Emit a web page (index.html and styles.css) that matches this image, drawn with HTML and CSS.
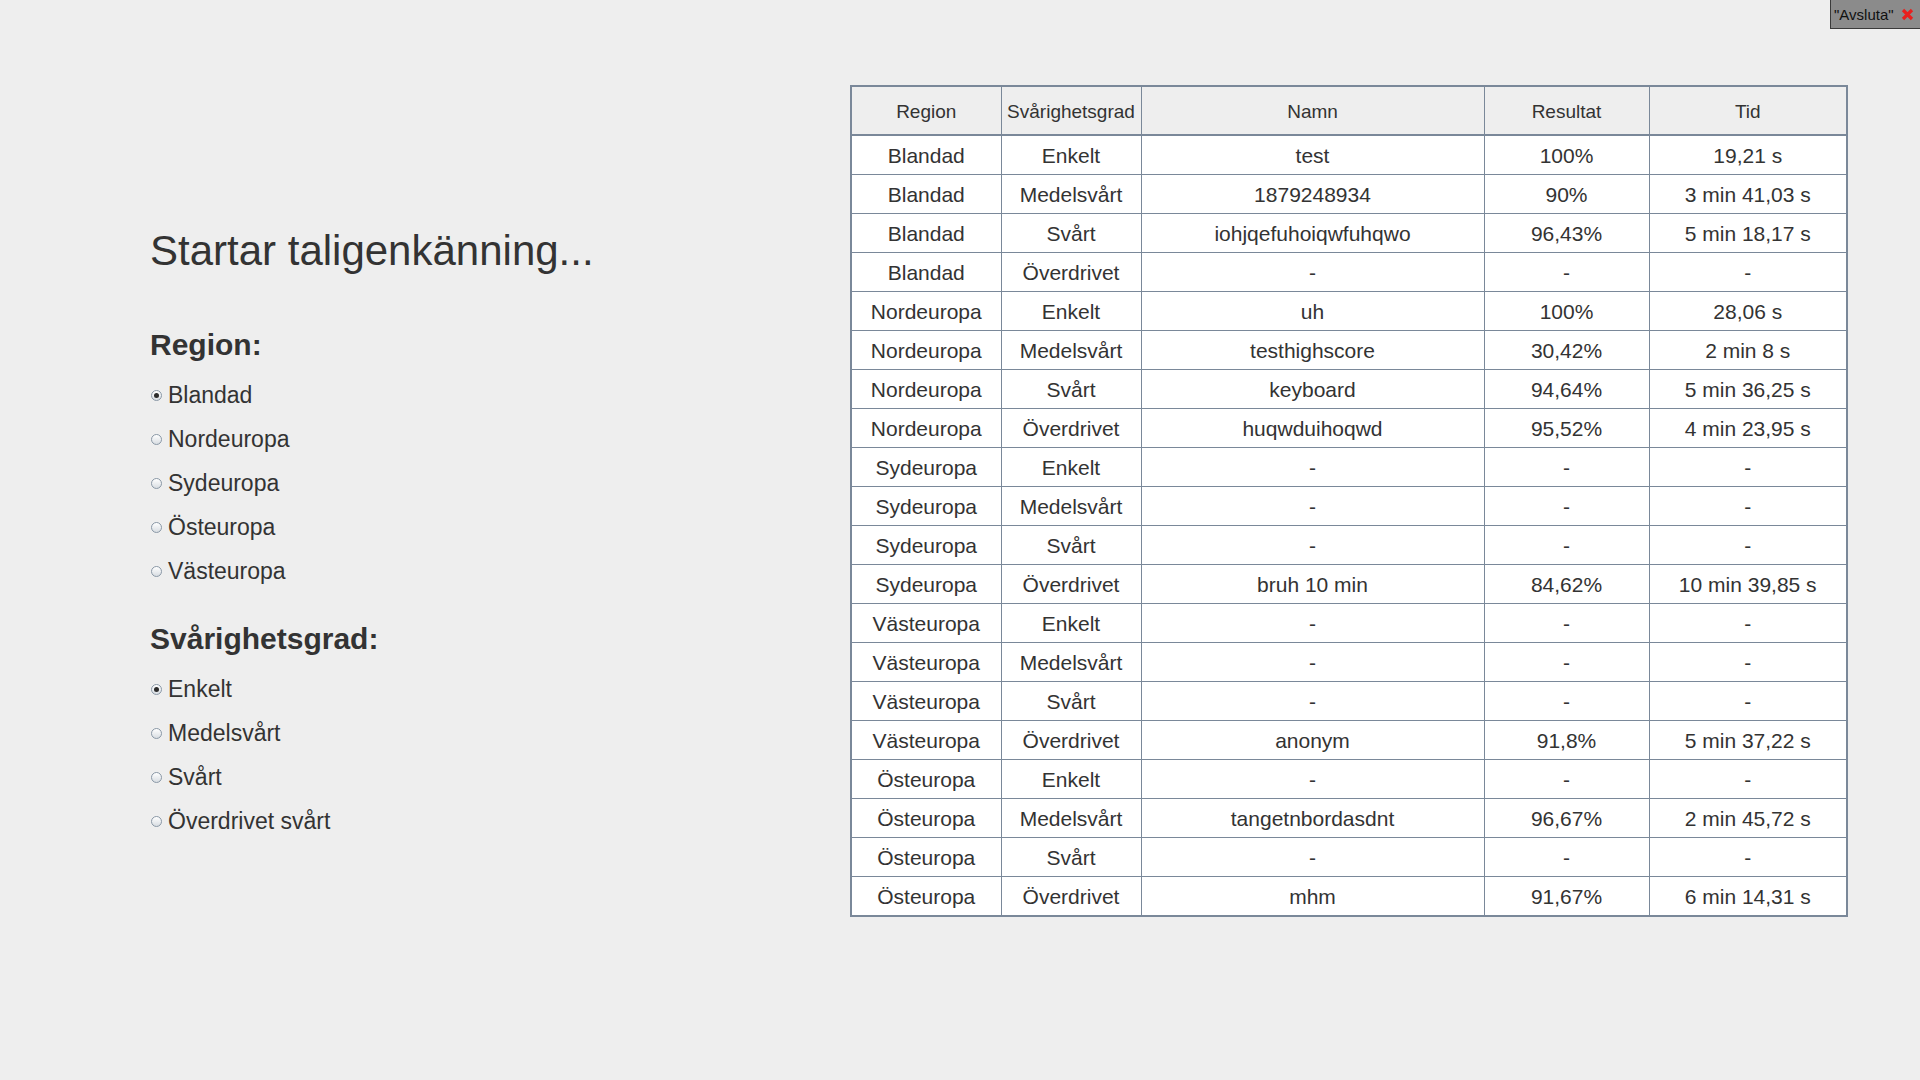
FILE: index.html
```html
<!DOCTYPE html>
<html lang="sv">
<head>
<meta charset="utf-8">
<title>Taligenkänning</title>
<link rel="stylesheet" href="styles.css">
</head>
<body>
<div class="app">
  <section class="settings">
    <h1 class="status">Startar taligenkänning...</h1>
    <h2 class="group-title first">Region:</h2>
    <ul class="radios">
      <li class="radio checked"><span class="dot"></span>Blandad</li>
      <li class="radio"><span class="dot"></span>Nordeuropa</li>
      <li class="radio"><span class="dot"></span>Sydeuropa</li>
      <li class="radio"><span class="dot"></span>Östeuropa</li>
      <li class="radio"><span class="dot"></span>Västeuropa</li>
    </ul>
    <h2 class="group-title second">Svårighetsgrad:</h2>
    <ul class="radios">
      <li class="radio checked"><span class="dot"></span>Enkelt</li>
      <li class="radio"><span class="dot"></span>Medelsvårt</li>
      <li class="radio"><span class="dot"></span>Svårt</li>
      <li class="radio"><span class="dot"></span>Överdrivet svårt</li>
    </ul>
  </section>
  <section class="scores">
    <table class="score-table">
      <colgroup>
        <col class="c1"><col class="c2"><col class="c3"><col class="c4"><col class="c5">
      </colgroup>
      <thead>
        <tr><th>Region</th><th>Svårighetsgrad</th><th>Namn</th><th>Resultat</th><th>Tid</th></tr>
      </thead>
      <tbody>
        <tr><td>Blandad</td><td>Enkelt</td><td>test</td><td>100%</td><td>19,21 s</td></tr>
        <tr><td>Blandad</td><td>Medelsvårt</td><td>1879248934</td><td>90%</td><td>3 min 41,03 s</td></tr>
        <tr><td>Blandad</td><td>Svårt</td><td>iohjqefuhoiqwfuhqwo</td><td>96,43%</td><td>5 min 18,17 s</td></tr>
        <tr><td>Blandad</td><td>Överdrivet</td><td>-</td><td>-</td><td>-</td></tr>
        <tr><td>Nordeuropa</td><td>Enkelt</td><td>uh</td><td>100%</td><td>28,06 s</td></tr>
        <tr><td>Nordeuropa</td><td>Medelsvårt</td><td>testhighscore</td><td>30,42%</td><td>2 min 8 s</td></tr>
        <tr><td>Nordeuropa</td><td>Svårt</td><td>keyboard</td><td>94,64%</td><td>5 min 36,25 s</td></tr>
        <tr><td>Nordeuropa</td><td>Överdrivet</td><td>huqwduihoqwd</td><td>95,52%</td><td>4 min 23,95 s</td></tr>
        <tr><td>Sydeuropa</td><td>Enkelt</td><td>-</td><td>-</td><td>-</td></tr>
        <tr><td>Sydeuropa</td><td>Medelsvårt</td><td>-</td><td>-</td><td>-</td></tr>
        <tr><td>Sydeuropa</td><td>Svårt</td><td>-</td><td>-</td><td>-</td></tr>
        <tr><td>Sydeuropa</td><td>Överdrivet</td><td>bruh 10 min</td><td>84,62%</td><td>10 min 39,85 s</td></tr>
        <tr><td>Västeuropa</td><td>Enkelt</td><td>-</td><td>-</td><td>-</td></tr>
        <tr><td>Västeuropa</td><td>Medelsvårt</td><td>-</td><td>-</td><td>-</td></tr>
        <tr><td>Västeuropa</td><td>Svårt</td><td>-</td><td>-</td><td>-</td></tr>
        <tr><td>Västeuropa</td><td>Överdrivet</td><td>anonym</td><td>91,8%</td><td>5 min 37,22 s</td></tr>
        <tr><td>Östeuropa</td><td>Enkelt</td><td>-</td><td>-</td><td>-</td></tr>
        <tr><td>Östeuropa</td><td>Medelsvårt</td><td>tangetnbordasdnt</td><td>96,67%</td><td>2 min 45,72 s</td></tr>
        <tr><td>Östeuropa</td><td>Svårt</td><td>-</td><td>-</td><td>-</td></tr>
        <tr><td>Östeuropa</td><td>Överdrivet</td><td>mhm</td><td>91,67%</td><td>6 min 14,31 s</td></tr>
      </tbody>
    </table>
  </section>
</div>
<button class="quit" type="button">"Avsluta"<svg class="quit-x" width="13" height="13" viewBox="0 0 13 13" aria-hidden="true"><path d="M2 2 L11 11 M11 2 L2 11" stroke="#e8201e" stroke-width="3.2" stroke-linecap="butt"/></svg></button>
</body>
</html>
```
FILE: styles.css
```css
html, body {
  margin: 0;
  padding: 0;
}
body {
  width: 1920px;
  height: 1080px;
  background: #eeeeee;
  color: #333333;
  font-family: "Liberation Sans", Arial, sans-serif;
  overflow: hidden;
}
.app {
  display: flex;
  align-items: flex-start;
}
.settings {
  width: 700px;
  padding-left: 150px;
  padding-top: 227px;
  display: flex;
  flex-direction: column;
}
.status {
  margin: 0;
  font-size: 42px;
  line-height: 48px;
  font-weight: normal;
  color: #333333;
}
.group-title {
  margin: 0;
  font-size: 30px;
  line-height: 36px;
  font-weight: bold;
  color: #333333;
}
.group-title.first {
  margin-top: 52px;
  margin-bottom: 10px;
}
.group-title.second {
  margin-top: 28px;
  margin-bottom: 10px;
}
.radios {
  list-style: none;
  margin: 0;
  padding: 0;
}
.radio {
  display: flex;
  align-items: center;
  height: 44px;
  font-size: 23px;
  color: #333333;
}
.dot {
  box-sizing: border-box;
  width: 11px;
  height: 11px;
  border-radius: 50%;
  border: 1px solid #8a98a6;
  background: linear-gradient(#ffffff, #d8dde2);
  margin-right: 6px;
  margin-left: 1px;
  display: flex;
  align-items: center;
  justify-content: center;
}
.radio.checked .dot::after {
  content: "";
  width: 5px;
  height: 5px;
  border-radius: 50%;
  background: #2b2b2b;
}
.scores {
  margin-top: 85px;
}
.score-table {
  border-collapse: collapse;
  table-layout: fixed;
  width: 996px;
  border: 2px solid #7a8899;
  color: #333333;
}
.c1 { width: 150px; }
.c2 { width: 140px; }
.c3 { width: 343px; }
.c4 { width: 165px; }
.c5 { width: 198px; }
.score-table th,
.score-table td {
  border: 1px solid #7a8899;
  text-align: center;
  padding: 2px 0 0 0;
  white-space: nowrap;
  overflow: hidden;
}
.score-table th {
  height: 45px;
  font-size: 19px;
  font-weight: normal;
  background: #eeeeee;
  border-bottom-width: 2px;
}
.score-table td {
  height: 36px;
  font-size: 21px;
  background: #ffffff;
}
.quit {
  position: absolute;
  top: -1px;
  left: 1830px;
  width: 92px;
  height: 30px;
  box-sizing: border-box;
  border: 1px solid #3a3a3a;
  background: #8b8b8b;
  color: #111111;
  font-family: "Liberation Sans", Arial, sans-serif;
  font-size: 15px;
  padding: 0 0 0 3px;
  display: flex;
  align-items: center;
  gap: 7px;
}
.quit-x {
  display: block;
}
```
